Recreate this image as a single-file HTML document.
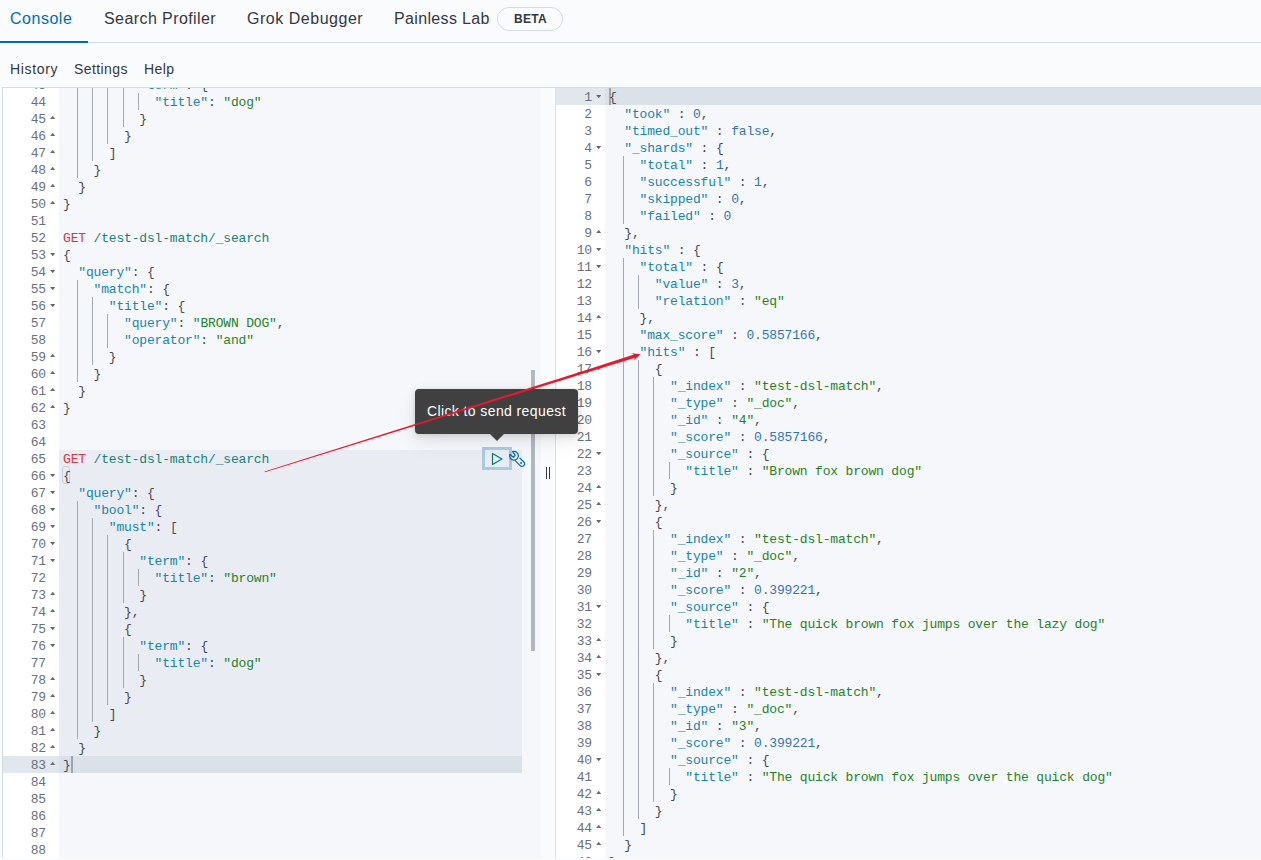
<!DOCTYPE html>
<html><head><meta charset="utf-8"><style>
html,body{margin:0;padding:0;}
body{width:1261px;height:860px;overflow:hidden;position:relative;background:#FAFBFD;font-family:"Liberation Sans",sans-serif;color:#343741;}
.abs{position:absolute;}
.tab{position:absolute;top:0;height:42px;line-height:37px;font-size:16px;color:#343741;white-space:nowrap;letter-spacing:0.35px;}
.tab.sel{color:#006BB4;}
.badge{position:absolute;left:497px;top:7px;width:66px;height:24px;border:1px solid #D3DAE6;border-radius:12px;box-sizing:border-box;font-size:12px;font-weight:bold;line-height:23px;text-align:center;color:#343741;letter-spacing:0.3px;padding-left:1px;}
.menu{position:absolute;top:59px;font-size:14px;line-height:20px;color:#343741;white-space:nowrap;letter-spacing:0.4px;}
.ln{position:absolute;width:40px;text-align:right;height:17px;line-height:17px;font-family:"Liberation Mono",monospace;font-size:13px;letter-spacing:-0.171px;color:#69707D;}
.cl{position:absolute;height:17px;line-height:17px;font-family:"Liberation Mono",monospace;font-size:13px;letter-spacing:-0.171px;white-space:pre;color:#343741;opacity:0.9;}
.ig{position:absolute;width:1px;height:17px;background:#A4A9B1;}
.fw{position:absolute;width:5.4px;height:3.4px;}
.fw.dn{background:#5F646D;clip-path:polygon(0 0,100% 0,50% 100%);margin-top:6.8px;}
.fw.up{background:#6A6B70;clip-path:polygon(50% 0,100% 100%,0 100%);margin-top:5.8px;}
.t-method{color:#D8232F;}
.t-url{color:#00756C;}
.t-key{color:#0079A5;}
.t-str{color:#0A760C;}
.t-num{color:#1A67AC;}
.t-paren{color:#343741;}
.t-punc{color:#343741;}

</style></head><body>
<div class="tab sel" style="left:10px;letter-spacing:0.52px">Console</div>
<div class="tab" style="left:104px;letter-spacing:0.42px">Search Profiler</div>
<div class="tab" style="left:247px;letter-spacing:0.52px">Grok Debugger</div>
<div class="tab" style="left:394px">Painless Lab</div>
<div class="badge">BETA</div>
<div class="abs" style="left:0;top:42px;width:1261px;height:1px;background:#D3DAE6"></div>
<div class="abs" style="left:0;top:41px;width:88px;height:2px;background:#006BB4"></div>
<div class="menu" style="left:10px;letter-spacing:0.65px">History</div>
<div class="menu" style="left:74px">Settings</div>
<div class="menu" style="left:144px">Help</div>
<div class="abs" style="left:2px;top:87px;width:1259px;height:1px;background:#D3DAE6"></div>
<div class="abs" style="left:2px;top:87px;width:1px;height:771px;background:#D3DAE6"></div>
<!-- left editor -->
<div class="abs" style="left:3px;top:88px;width:56px;height:770px;background:#FFFFFF"></div>
<div class="abs" style="left:59px;top:88px;width:482px;height:770px;background:#F5F7FA"></div>
<div class="abs" style="left:59px;top:450px;width:463px;height:323px;background:#E9EDF3"></div>
<div class="abs" style="left:3px;top:756px;width:56px;height:17px;background:#E2E6ED"></div>
<div class="abs" style="left:59px;top:756px;width:463px;height:17px;background:#DBE1E9"></div>
<div class="abs" style="left:62px;top:466px;width:8px;height:18px;border:1px solid #C9CED6;border-radius:3px;box-sizing:border-box"></div>
<div class="abs" style="left:71px;top:756px;width:2px;height:17px;background:#9EA3AC"></div>
<div class="abs" style="left:531px;top:370px;width:4px;height:281px;background:#B3B7BE"></div>
<div style="position:absolute;left:0;top:88px;width:541px;height:770px;overflow:hidden">
<div style="position:absolute;left:0;top:-88px;">
<div class="ln" style="top:77px;left:6px">43</div>
<div class="fw dn" style="top:76px;left:50px"></div>
<div class="ig" style="top:76px;left:77px"></div>
<div class="ig" style="top:76px;left:92px"></div>
<div class="ig" style="top:76px;left:107px"></div>
<div class="ig" style="top:76px;left:123px"></div>
<div class="cl" style="top:77px;left:63.0px">          <span class="t-key">&quot;term&quot;</span><span class="t-punc">:</span> <span class="t-paren">{</span></div>
<div class="ln" style="top:94px;left:6px">44</div>
<div class="ig" style="top:93px;left:77px"></div>
<div class="ig" style="top:93px;left:92px"></div>
<div class="ig" style="top:93px;left:107px"></div>
<div class="ig" style="top:93px;left:123px"></div>
<div class="ig" style="top:93px;left:138px"></div>
<div class="cl" style="top:94px;left:63.0px">            <span class="t-key">&quot;title&quot;</span><span class="t-punc">:</span> <span class="t-str">&quot;dog&quot;</span></div>
<div class="ln" style="top:111px;left:6px">45</div>
<div class="fw up" style="top:110px;left:50px"></div>
<div class="ig" style="top:110px;left:77px"></div>
<div class="ig" style="top:110px;left:92px"></div>
<div class="ig" style="top:110px;left:107px"></div>
<div class="ig" style="top:110px;left:123px"></div>
<div class="cl" style="top:111px;left:63.0px">          <span class="t-paren">}</span></div>
<div class="ln" style="top:128px;left:6px">46</div>
<div class="fw up" style="top:127px;left:50px"></div>
<div class="ig" style="top:127px;left:77px"></div>
<div class="ig" style="top:127px;left:92px"></div>
<div class="ig" style="top:127px;left:107px"></div>
<div class="cl" style="top:128px;left:63.0px">        <span class="t-paren">}</span></div>
<div class="ln" style="top:145px;left:6px">47</div>
<div class="fw up" style="top:144px;left:50px"></div>
<div class="ig" style="top:144px;left:77px"></div>
<div class="ig" style="top:144px;left:92px"></div>
<div class="cl" style="top:145px;left:63.0px">      <span class="t-paren">]</span></div>
<div class="ln" style="top:162px;left:6px">48</div>
<div class="fw up" style="top:161px;left:50px"></div>
<div class="ig" style="top:161px;left:77px"></div>
<div class="cl" style="top:162px;left:63.0px">    <span class="t-paren">}</span></div>
<div class="ln" style="top:179px;left:6px">49</div>
<div class="fw up" style="top:178px;left:50px"></div>
<div class="cl" style="top:179px;left:63.0px">  <span class="t-paren">}</span></div>
<div class="ln" style="top:196px;left:6px">50</div>
<div class="fw up" style="top:195px;left:50px"></div>
<div class="cl" style="top:196px;left:63.0px"><span class="t-paren">}</span></div>
<div class="ln" style="top:213px;left:6px">51</div>
<div class="ln" style="top:230px;left:6px">52</div>
<div class="cl" style="top:230px;left:63.0px"><span class="t-method">GET</span> <span class="t-url">/test-dsl-match/_search</span></div>
<div class="ln" style="top:247px;left:6px">53</div>
<div class="fw dn" style="top:246px;left:50px"></div>
<div class="cl" style="top:247px;left:63.0px"><span class="t-paren">{</span></div>
<div class="ln" style="top:264px;left:6px">54</div>
<div class="fw dn" style="top:263px;left:50px"></div>
<div class="cl" style="top:264px;left:63.0px">  <span class="t-key">&quot;query&quot;</span><span class="t-punc">:</span> <span class="t-paren">{</span></div>
<div class="ln" style="top:281px;left:6px">55</div>
<div class="fw dn" style="top:280px;left:50px"></div>
<div class="ig" style="top:280px;left:77px"></div>
<div class="cl" style="top:281px;left:63.0px">    <span class="t-key">&quot;match&quot;</span><span class="t-punc">:</span> <span class="t-paren">{</span></div>
<div class="ln" style="top:298px;left:6px">56</div>
<div class="fw dn" style="top:297px;left:50px"></div>
<div class="ig" style="top:297px;left:77px"></div>
<div class="ig" style="top:297px;left:92px"></div>
<div class="cl" style="top:298px;left:63.0px">      <span class="t-key">&quot;title&quot;</span><span class="t-punc">:</span> <span class="t-paren">{</span></div>
<div class="ln" style="top:315px;left:6px">57</div>
<div class="ig" style="top:314px;left:77px"></div>
<div class="ig" style="top:314px;left:92px"></div>
<div class="ig" style="top:314px;left:107px"></div>
<div class="cl" style="top:315px;left:63.0px">        <span class="t-key">&quot;query&quot;</span><span class="t-punc">:</span> <span class="t-str">&quot;BROWN DOG&quot;</span><span class="t-punc">,</span></div>
<div class="ln" style="top:332px;left:6px">58</div>
<div class="ig" style="top:331px;left:77px"></div>
<div class="ig" style="top:331px;left:92px"></div>
<div class="ig" style="top:331px;left:107px"></div>
<div class="cl" style="top:332px;left:63.0px">        <span class="t-key">&quot;operator&quot;</span><span class="t-punc">:</span> <span class="t-str">&quot;and&quot;</span></div>
<div class="ln" style="top:349px;left:6px">59</div>
<div class="fw up" style="top:348px;left:50px"></div>
<div class="ig" style="top:348px;left:77px"></div>
<div class="ig" style="top:348px;left:92px"></div>
<div class="cl" style="top:349px;left:63.0px">      <span class="t-paren">}</span></div>
<div class="ln" style="top:366px;left:6px">60</div>
<div class="fw up" style="top:365px;left:50px"></div>
<div class="ig" style="top:365px;left:77px"></div>
<div class="cl" style="top:366px;left:63.0px">    <span class="t-paren">}</span></div>
<div class="ln" style="top:383px;left:6px">61</div>
<div class="fw up" style="top:382px;left:50px"></div>
<div class="cl" style="top:383px;left:63.0px">  <span class="t-paren">}</span></div>
<div class="ln" style="top:400px;left:6px">62</div>
<div class="fw up" style="top:399px;left:50px"></div>
<div class="cl" style="top:400px;left:63.0px"><span class="t-paren">}</span></div>
<div class="ln" style="top:417px;left:6px">63</div>
<div class="ln" style="top:434px;left:6px">64</div>
<div class="ln" style="top:451px;left:6px">65</div>
<div class="cl" style="top:451px;left:63.0px"><span class="t-method">GET</span> <span class="t-url">/test-dsl-match/_search</span></div>
<div class="ln" style="top:468px;left:6px">66</div>
<div class="fw dn" style="top:467px;left:50px"></div>
<div class="cl" style="top:468px;left:63.0px"><span class="t-paren">{</span></div>
<div class="ln" style="top:485px;left:6px">67</div>
<div class="fw dn" style="top:484px;left:50px"></div>
<div class="cl" style="top:485px;left:63.0px">  <span class="t-key">&quot;query&quot;</span><span class="t-punc">:</span> <span class="t-paren">{</span></div>
<div class="ln" style="top:502px;left:6px">68</div>
<div class="fw dn" style="top:501px;left:50px"></div>
<div class="ig" style="top:501px;left:77px"></div>
<div class="cl" style="top:502px;left:63.0px">    <span class="t-key">&quot;bool&quot;</span><span class="t-punc">:</span> <span class="t-paren">{</span></div>
<div class="ln" style="top:519px;left:6px">69</div>
<div class="fw dn" style="top:518px;left:50px"></div>
<div class="ig" style="top:518px;left:77px"></div>
<div class="ig" style="top:518px;left:92px"></div>
<div class="cl" style="top:519px;left:63.0px">      <span class="t-key">&quot;must&quot;</span><span class="t-punc">:</span> <span class="t-paren">[</span></div>
<div class="ln" style="top:536px;left:6px">70</div>
<div class="fw dn" style="top:535px;left:50px"></div>
<div class="ig" style="top:535px;left:77px"></div>
<div class="ig" style="top:535px;left:92px"></div>
<div class="ig" style="top:535px;left:107px"></div>
<div class="cl" style="top:536px;left:63.0px">        <span class="t-paren">{</span></div>
<div class="ln" style="top:553px;left:6px">71</div>
<div class="fw dn" style="top:552px;left:50px"></div>
<div class="ig" style="top:552px;left:77px"></div>
<div class="ig" style="top:552px;left:92px"></div>
<div class="ig" style="top:552px;left:107px"></div>
<div class="ig" style="top:552px;left:123px"></div>
<div class="cl" style="top:553px;left:63.0px">          <span class="t-key">&quot;term&quot;</span><span class="t-punc">:</span> <span class="t-paren">{</span></div>
<div class="ln" style="top:570px;left:6px">72</div>
<div class="ig" style="top:569px;left:77px"></div>
<div class="ig" style="top:569px;left:92px"></div>
<div class="ig" style="top:569px;left:107px"></div>
<div class="ig" style="top:569px;left:123px"></div>
<div class="ig" style="top:569px;left:138px"></div>
<div class="cl" style="top:570px;left:63.0px">            <span class="t-key">&quot;title&quot;</span><span class="t-punc">:</span> <span class="t-str">&quot;brown&quot;</span></div>
<div class="ln" style="top:587px;left:6px">73</div>
<div class="fw up" style="top:586px;left:50px"></div>
<div class="ig" style="top:586px;left:77px"></div>
<div class="ig" style="top:586px;left:92px"></div>
<div class="ig" style="top:586px;left:107px"></div>
<div class="ig" style="top:586px;left:123px"></div>
<div class="cl" style="top:587px;left:63.0px">          <span class="t-paren">}</span></div>
<div class="ln" style="top:604px;left:6px">74</div>
<div class="fw up" style="top:603px;left:50px"></div>
<div class="ig" style="top:603px;left:77px"></div>
<div class="ig" style="top:603px;left:92px"></div>
<div class="ig" style="top:603px;left:107px"></div>
<div class="cl" style="top:604px;left:63.0px">        <span class="t-paren">}</span><span class="t-punc">,</span></div>
<div class="ln" style="top:621px;left:6px">75</div>
<div class="fw dn" style="top:620px;left:50px"></div>
<div class="ig" style="top:620px;left:77px"></div>
<div class="ig" style="top:620px;left:92px"></div>
<div class="ig" style="top:620px;left:107px"></div>
<div class="cl" style="top:621px;left:63.0px">        <span class="t-paren">{</span></div>
<div class="ln" style="top:638px;left:6px">76</div>
<div class="fw dn" style="top:637px;left:50px"></div>
<div class="ig" style="top:637px;left:77px"></div>
<div class="ig" style="top:637px;left:92px"></div>
<div class="ig" style="top:637px;left:107px"></div>
<div class="ig" style="top:637px;left:123px"></div>
<div class="cl" style="top:638px;left:63.0px">          <span class="t-key">&quot;term&quot;</span><span class="t-punc">:</span> <span class="t-paren">{</span></div>
<div class="ln" style="top:655px;left:6px">77</div>
<div class="ig" style="top:654px;left:77px"></div>
<div class="ig" style="top:654px;left:92px"></div>
<div class="ig" style="top:654px;left:107px"></div>
<div class="ig" style="top:654px;left:123px"></div>
<div class="ig" style="top:654px;left:138px"></div>
<div class="cl" style="top:655px;left:63.0px">            <span class="t-key">&quot;title&quot;</span><span class="t-punc">:</span> <span class="t-str">&quot;dog&quot;</span></div>
<div class="ln" style="top:672px;left:6px">78</div>
<div class="fw up" style="top:671px;left:50px"></div>
<div class="ig" style="top:671px;left:77px"></div>
<div class="ig" style="top:671px;left:92px"></div>
<div class="ig" style="top:671px;left:107px"></div>
<div class="ig" style="top:671px;left:123px"></div>
<div class="cl" style="top:672px;left:63.0px">          <span class="t-paren">}</span></div>
<div class="ln" style="top:689px;left:6px">79</div>
<div class="fw up" style="top:688px;left:50px"></div>
<div class="ig" style="top:688px;left:77px"></div>
<div class="ig" style="top:688px;left:92px"></div>
<div class="ig" style="top:688px;left:107px"></div>
<div class="cl" style="top:689px;left:63.0px">        <span class="t-paren">}</span></div>
<div class="ln" style="top:706px;left:6px">80</div>
<div class="fw up" style="top:705px;left:50px"></div>
<div class="ig" style="top:705px;left:77px"></div>
<div class="ig" style="top:705px;left:92px"></div>
<div class="cl" style="top:706px;left:63.0px">      <span class="t-paren">]</span></div>
<div class="ln" style="top:723px;left:6px">81</div>
<div class="fw up" style="top:722px;left:50px"></div>
<div class="ig" style="top:722px;left:77px"></div>
<div class="cl" style="top:723px;left:63.0px">    <span class="t-paren">}</span></div>
<div class="ln" style="top:740px;left:6px">82</div>
<div class="fw up" style="top:739px;left:50px"></div>
<div class="cl" style="top:740px;left:63.0px">  <span class="t-paren">}</span></div>
<div class="ln" style="top:757px;left:6px">83</div>
<div class="fw up" style="top:756px;left:50px"></div>
<div class="cl" style="top:757px;left:63.0px"><span class="t-paren">}</span></div>
<div class="ln" style="top:774px;left:6px">84</div>
<div class="ln" style="top:791px;left:6px">85</div>
<div class="ln" style="top:808px;left:6px">86</div>
<div class="ln" style="top:825px;left:6px">87</div>
<div class="ln" style="top:842px;left:6px">88</div>
</div></div>
<!-- right editor -->
<div class="abs" style="left:555px;top:88px;width:1px;height:770px;background:#DCE1E9"></div>
<div class="abs" style="left:556px;top:88px;width:49px;height:770px;background:#FFFFFF"></div>
<div class="abs" style="left:605px;top:88px;width:656px;height:770px;background:#F5F7FA"></div>
<div class="abs" style="left:556px;top:88px;width:49px;height:17px;background:#E2E6ED"></div>
<div class="abs" style="left:605px;top:88px;width:656px;height:17px;background:#DBE1E9"></div>
<div class="abs" style="left:609px;top:88px;width:2px;height:17px;background:#9EA3AC"></div>
<div style="position:absolute;left:0;top:88px;width:1261px;height:770px;overflow:hidden">
<div style="position:absolute;left:0;top:-88px;">
<div class="ln" style="top:89px;left:552px">1</div>
<div class="fw dn" style="top:88px;left:596px"></div>
<div class="cl" style="top:89px;left:609.0px"><span class="t-paren">{</span></div>
<div class="ln" style="top:106px;left:552px">2</div>
<div class="cl" style="top:106px;left:609.0px">  <span class="t-key">&quot;took&quot;</span> <span class="t-punc">:</span> <span class="t-num">0</span><span class="t-punc">,</span></div>
<div class="ln" style="top:123px;left:552px">3</div>
<div class="cl" style="top:123px;left:609.0px">  <span class="t-key">&quot;timed_out&quot;</span> <span class="t-punc">:</span> <span class="t-num">false</span><span class="t-punc">,</span></div>
<div class="ln" style="top:140px;left:552px">4</div>
<div class="fw dn" style="top:139px;left:596px"></div>
<div class="cl" style="top:140px;left:609.0px">  <span class="t-key">&quot;_shards&quot;</span> <span class="t-punc">:</span> <span class="t-paren">{</span></div>
<div class="ln" style="top:157px;left:552px">5</div>
<div class="ig" style="top:156px;left:623px"></div>
<div class="cl" style="top:157px;left:609.0px">    <span class="t-key">&quot;total&quot;</span> <span class="t-punc">:</span> <span class="t-num">1</span><span class="t-punc">,</span></div>
<div class="ln" style="top:174px;left:552px">6</div>
<div class="ig" style="top:173px;left:623px"></div>
<div class="cl" style="top:174px;left:609.0px">    <span class="t-key">&quot;successful&quot;</span> <span class="t-punc">:</span> <span class="t-num">1</span><span class="t-punc">,</span></div>
<div class="ln" style="top:191px;left:552px">7</div>
<div class="ig" style="top:190px;left:623px"></div>
<div class="cl" style="top:191px;left:609.0px">    <span class="t-key">&quot;skipped&quot;</span> <span class="t-punc">:</span> <span class="t-num">0</span><span class="t-punc">,</span></div>
<div class="ln" style="top:208px;left:552px">8</div>
<div class="ig" style="top:207px;left:623px"></div>
<div class="cl" style="top:208px;left:609.0px">    <span class="t-key">&quot;failed&quot;</span> <span class="t-punc">:</span> <span class="t-num">0</span></div>
<div class="ln" style="top:225px;left:552px">9</div>
<div class="fw up" style="top:224px;left:596px"></div>
<div class="cl" style="top:225px;left:609.0px">  <span class="t-paren">}</span><span class="t-punc">,</span></div>
<div class="ln" style="top:242px;left:552px">10</div>
<div class="fw dn" style="top:241px;left:596px"></div>
<div class="cl" style="top:242px;left:609.0px">  <span class="t-key">&quot;hits&quot;</span> <span class="t-punc">:</span> <span class="t-paren">{</span></div>
<div class="ln" style="top:259px;left:552px">11</div>
<div class="fw dn" style="top:258px;left:596px"></div>
<div class="ig" style="top:258px;left:623px"></div>
<div class="cl" style="top:259px;left:609.0px">    <span class="t-key">&quot;total&quot;</span> <span class="t-punc">:</span> <span class="t-paren">{</span></div>
<div class="ln" style="top:276px;left:552px">12</div>
<div class="ig" style="top:275px;left:623px"></div>
<div class="ig" style="top:275px;left:638px"></div>
<div class="cl" style="top:276px;left:609.0px">      <span class="t-key">&quot;value&quot;</span> <span class="t-punc">:</span> <span class="t-num">3</span><span class="t-punc">,</span></div>
<div class="ln" style="top:293px;left:552px">13</div>
<div class="ig" style="top:292px;left:623px"></div>
<div class="ig" style="top:292px;left:638px"></div>
<div class="cl" style="top:293px;left:609.0px">      <span class="t-key">&quot;relation&quot;</span> <span class="t-punc">:</span> <span class="t-str">&quot;eq&quot;</span></div>
<div class="ln" style="top:310px;left:552px">14</div>
<div class="fw up" style="top:309px;left:596px"></div>
<div class="ig" style="top:309px;left:623px"></div>
<div class="cl" style="top:310px;left:609.0px">    <span class="t-paren">}</span><span class="t-punc">,</span></div>
<div class="ln" style="top:327px;left:552px">15</div>
<div class="ig" style="top:326px;left:623px"></div>
<div class="cl" style="top:327px;left:609.0px">    <span class="t-key">&quot;max_score&quot;</span> <span class="t-punc">:</span> <span class="t-num">0.5857166</span><span class="t-punc">,</span></div>
<div class="ln" style="top:344px;left:552px">16</div>
<div class="fw dn" style="top:343px;left:596px"></div>
<div class="ig" style="top:343px;left:623px"></div>
<div class="cl" style="top:344px;left:609.0px">    <span class="t-key">&quot;hits&quot;</span> <span class="t-punc">:</span> <span class="t-paren">[</span></div>
<div class="ln" style="top:361px;left:552px">17</div>
<div class="fw dn" style="top:360px;left:596px"></div>
<div class="ig" style="top:360px;left:623px"></div>
<div class="ig" style="top:360px;left:638px"></div>
<div class="cl" style="top:361px;left:609.0px">      <span class="t-paren">{</span></div>
<div class="ln" style="top:378px;left:552px">18</div>
<div class="ig" style="top:377px;left:623px"></div>
<div class="ig" style="top:377px;left:638px"></div>
<div class="ig" style="top:377px;left:653px"></div>
<div class="cl" style="top:378px;left:609.0px">        <span class="t-key">&quot;_index&quot;</span> <span class="t-punc">:</span> <span class="t-str">&quot;test-dsl-match&quot;</span><span class="t-punc">,</span></div>
<div class="ln" style="top:395px;left:552px">19</div>
<div class="ig" style="top:394px;left:623px"></div>
<div class="ig" style="top:394px;left:638px"></div>
<div class="ig" style="top:394px;left:653px"></div>
<div class="cl" style="top:395px;left:609.0px">        <span class="t-key">&quot;_type&quot;</span> <span class="t-punc">:</span> <span class="t-str">&quot;_doc&quot;</span><span class="t-punc">,</span></div>
<div class="ln" style="top:412px;left:552px">20</div>
<div class="ig" style="top:411px;left:623px"></div>
<div class="ig" style="top:411px;left:638px"></div>
<div class="ig" style="top:411px;left:653px"></div>
<div class="cl" style="top:412px;left:609.0px">        <span class="t-key">&quot;_id&quot;</span> <span class="t-punc">:</span> <span class="t-str">&quot;4&quot;</span><span class="t-punc">,</span></div>
<div class="ln" style="top:429px;left:552px">21</div>
<div class="ig" style="top:428px;left:623px"></div>
<div class="ig" style="top:428px;left:638px"></div>
<div class="ig" style="top:428px;left:653px"></div>
<div class="cl" style="top:429px;left:609.0px">        <span class="t-key">&quot;_score&quot;</span> <span class="t-punc">:</span> <span class="t-num">0.5857166</span><span class="t-punc">,</span></div>
<div class="ln" style="top:446px;left:552px">22</div>
<div class="fw dn" style="top:445px;left:596px"></div>
<div class="ig" style="top:445px;left:623px"></div>
<div class="ig" style="top:445px;left:638px"></div>
<div class="ig" style="top:445px;left:653px"></div>
<div class="cl" style="top:446px;left:609.0px">        <span class="t-key">&quot;_source&quot;</span> <span class="t-punc">:</span> <span class="t-paren">{</span></div>
<div class="ln" style="top:463px;left:552px">23</div>
<div class="ig" style="top:462px;left:623px"></div>
<div class="ig" style="top:462px;left:638px"></div>
<div class="ig" style="top:462px;left:653px"></div>
<div class="ig" style="top:462px;left:669px"></div>
<div class="cl" style="top:463px;left:609.0px">          <span class="t-key">&quot;title&quot;</span> <span class="t-punc">:</span> <span class="t-str">&quot;Brown fox brown dog&quot;</span></div>
<div class="ln" style="top:480px;left:552px">24</div>
<div class="fw up" style="top:479px;left:596px"></div>
<div class="ig" style="top:479px;left:623px"></div>
<div class="ig" style="top:479px;left:638px"></div>
<div class="ig" style="top:479px;left:653px"></div>
<div class="cl" style="top:480px;left:609.0px">        <span class="t-paren">}</span></div>
<div class="ln" style="top:497px;left:552px">25</div>
<div class="fw up" style="top:496px;left:596px"></div>
<div class="ig" style="top:496px;left:623px"></div>
<div class="ig" style="top:496px;left:638px"></div>
<div class="cl" style="top:497px;left:609.0px">      <span class="t-paren">}</span><span class="t-punc">,</span></div>
<div class="ln" style="top:514px;left:552px">26</div>
<div class="fw dn" style="top:513px;left:596px"></div>
<div class="ig" style="top:513px;left:623px"></div>
<div class="ig" style="top:513px;left:638px"></div>
<div class="cl" style="top:514px;left:609.0px">      <span class="t-paren">{</span></div>
<div class="ln" style="top:531px;left:552px">27</div>
<div class="ig" style="top:530px;left:623px"></div>
<div class="ig" style="top:530px;left:638px"></div>
<div class="ig" style="top:530px;left:653px"></div>
<div class="cl" style="top:531px;left:609.0px">        <span class="t-key">&quot;_index&quot;</span> <span class="t-punc">:</span> <span class="t-str">&quot;test-dsl-match&quot;</span><span class="t-punc">,</span></div>
<div class="ln" style="top:548px;left:552px">28</div>
<div class="ig" style="top:547px;left:623px"></div>
<div class="ig" style="top:547px;left:638px"></div>
<div class="ig" style="top:547px;left:653px"></div>
<div class="cl" style="top:548px;left:609.0px">        <span class="t-key">&quot;_type&quot;</span> <span class="t-punc">:</span> <span class="t-str">&quot;_doc&quot;</span><span class="t-punc">,</span></div>
<div class="ln" style="top:565px;left:552px">29</div>
<div class="ig" style="top:564px;left:623px"></div>
<div class="ig" style="top:564px;left:638px"></div>
<div class="ig" style="top:564px;left:653px"></div>
<div class="cl" style="top:565px;left:609.0px">        <span class="t-key">&quot;_id&quot;</span> <span class="t-punc">:</span> <span class="t-str">&quot;2&quot;</span><span class="t-punc">,</span></div>
<div class="ln" style="top:582px;left:552px">30</div>
<div class="ig" style="top:581px;left:623px"></div>
<div class="ig" style="top:581px;left:638px"></div>
<div class="ig" style="top:581px;left:653px"></div>
<div class="cl" style="top:582px;left:609.0px">        <span class="t-key">&quot;_score&quot;</span> <span class="t-punc">:</span> <span class="t-num">0.399221</span><span class="t-punc">,</span></div>
<div class="ln" style="top:599px;left:552px">31</div>
<div class="fw dn" style="top:598px;left:596px"></div>
<div class="ig" style="top:598px;left:623px"></div>
<div class="ig" style="top:598px;left:638px"></div>
<div class="ig" style="top:598px;left:653px"></div>
<div class="cl" style="top:599px;left:609.0px">        <span class="t-key">&quot;_source&quot;</span> <span class="t-punc">:</span> <span class="t-paren">{</span></div>
<div class="ln" style="top:616px;left:552px">32</div>
<div class="ig" style="top:615px;left:623px"></div>
<div class="ig" style="top:615px;left:638px"></div>
<div class="ig" style="top:615px;left:653px"></div>
<div class="ig" style="top:615px;left:669px"></div>
<div class="cl" style="top:616px;left:609.0px">          <span class="t-key">&quot;title&quot;</span> <span class="t-punc">:</span> <span class="t-str">&quot;The quick brown fox jumps over the lazy dog&quot;</span></div>
<div class="ln" style="top:633px;left:552px">33</div>
<div class="fw up" style="top:632px;left:596px"></div>
<div class="ig" style="top:632px;left:623px"></div>
<div class="ig" style="top:632px;left:638px"></div>
<div class="ig" style="top:632px;left:653px"></div>
<div class="cl" style="top:633px;left:609.0px">        <span class="t-paren">}</span></div>
<div class="ln" style="top:650px;left:552px">34</div>
<div class="fw up" style="top:649px;left:596px"></div>
<div class="ig" style="top:649px;left:623px"></div>
<div class="ig" style="top:649px;left:638px"></div>
<div class="cl" style="top:650px;left:609.0px">      <span class="t-paren">}</span><span class="t-punc">,</span></div>
<div class="ln" style="top:667px;left:552px">35</div>
<div class="fw dn" style="top:666px;left:596px"></div>
<div class="ig" style="top:666px;left:623px"></div>
<div class="ig" style="top:666px;left:638px"></div>
<div class="cl" style="top:667px;left:609.0px">      <span class="t-paren">{</span></div>
<div class="ln" style="top:684px;left:552px">36</div>
<div class="ig" style="top:683px;left:623px"></div>
<div class="ig" style="top:683px;left:638px"></div>
<div class="ig" style="top:683px;left:653px"></div>
<div class="cl" style="top:684px;left:609.0px">        <span class="t-key">&quot;_index&quot;</span> <span class="t-punc">:</span> <span class="t-str">&quot;test-dsl-match&quot;</span><span class="t-punc">,</span></div>
<div class="ln" style="top:701px;left:552px">37</div>
<div class="ig" style="top:700px;left:623px"></div>
<div class="ig" style="top:700px;left:638px"></div>
<div class="ig" style="top:700px;left:653px"></div>
<div class="cl" style="top:701px;left:609.0px">        <span class="t-key">&quot;_type&quot;</span> <span class="t-punc">:</span> <span class="t-str">&quot;_doc&quot;</span><span class="t-punc">,</span></div>
<div class="ln" style="top:718px;left:552px">38</div>
<div class="ig" style="top:717px;left:623px"></div>
<div class="ig" style="top:717px;left:638px"></div>
<div class="ig" style="top:717px;left:653px"></div>
<div class="cl" style="top:718px;left:609.0px">        <span class="t-key">&quot;_id&quot;</span> <span class="t-punc">:</span> <span class="t-str">&quot;3&quot;</span><span class="t-punc">,</span></div>
<div class="ln" style="top:735px;left:552px">39</div>
<div class="ig" style="top:734px;left:623px"></div>
<div class="ig" style="top:734px;left:638px"></div>
<div class="ig" style="top:734px;left:653px"></div>
<div class="cl" style="top:735px;left:609.0px">        <span class="t-key">&quot;_score&quot;</span> <span class="t-punc">:</span> <span class="t-num">0.399221</span><span class="t-punc">,</span></div>
<div class="ln" style="top:752px;left:552px">40</div>
<div class="fw dn" style="top:751px;left:596px"></div>
<div class="ig" style="top:751px;left:623px"></div>
<div class="ig" style="top:751px;left:638px"></div>
<div class="ig" style="top:751px;left:653px"></div>
<div class="cl" style="top:752px;left:609.0px">        <span class="t-key">&quot;_source&quot;</span> <span class="t-punc">:</span> <span class="t-paren">{</span></div>
<div class="ln" style="top:769px;left:552px">41</div>
<div class="ig" style="top:768px;left:623px"></div>
<div class="ig" style="top:768px;left:638px"></div>
<div class="ig" style="top:768px;left:653px"></div>
<div class="ig" style="top:768px;left:669px"></div>
<div class="cl" style="top:769px;left:609.0px">          <span class="t-key">&quot;title&quot;</span> <span class="t-punc">:</span> <span class="t-str">&quot;The quick brown fox jumps over the quick dog&quot;</span></div>
<div class="ln" style="top:786px;left:552px">42</div>
<div class="fw up" style="top:785px;left:596px"></div>
<div class="ig" style="top:785px;left:623px"></div>
<div class="ig" style="top:785px;left:638px"></div>
<div class="ig" style="top:785px;left:653px"></div>
<div class="cl" style="top:786px;left:609.0px">        <span class="t-paren">}</span></div>
<div class="ln" style="top:803px;left:552px">43</div>
<div class="fw up" style="top:802px;left:596px"></div>
<div class="ig" style="top:802px;left:623px"></div>
<div class="ig" style="top:802px;left:638px"></div>
<div class="cl" style="top:803px;left:609.0px">      <span class="t-paren">}</span></div>
<div class="ln" style="top:820px;left:552px">44</div>
<div class="fw up" style="top:819px;left:596px"></div>
<div class="ig" style="top:819px;left:623px"></div>
<div class="cl" style="top:820px;left:609.0px">    <span class="t-paren">]</span></div>
<div class="ln" style="top:837px;left:552px">45</div>
<div class="fw up" style="top:836px;left:596px"></div>
<div class="cl" style="top:837px;left:609.0px">  <span class="t-paren">}</span></div>
<div class="ln" style="top:854px;left:552px">46</div>
<div class="fw up" style="top:853px;left:596px"></div>
<div class="cl" style="top:854px;left:609.0px"><span class="t-paren">}</span></div>
</div></div>
<!-- resizer -->
<div class="abs" style="left:546px;top:467px;width:1px;height:12px;background:#343741"></div>
<div class="abs" style="left:549px;top:467px;width:1px;height:12px;background:#343741"></div>
<!-- action buttons -->
<div class="abs" style="left:482px;top:447px;width:30px;height:23px;border:3px solid #A9CBE0;box-sizing:border-box;background:#E9EDF3"></div>
<svg class="abs" style="left:482px;top:447px" width="30" height="23" viewBox="0 0 30 23">
<path d="M10.5 6.5 L20 12 L10.5 17.5 Z" fill="none" stroke="#017D73" stroke-width="1.2" stroke-linejoin="round"/>
</svg>
<svg class="abs" style="left:505px;top:447px" width="25" height="23" viewBox="0 0 25 23">
<g fill="none" stroke="#006BB4" stroke-width="1.25" stroke-linejoin="round" stroke-linecap="round">
<path d="M7.5 4.67 A4.4 4.4 0 1 1 4.87 7.3 L8.4 10.3 L10.3 8.4 Z"/>
<path d="M10.2 13.68 L15.16 18.64 A2.6 2.6 0 0 0 18.84 14.96 L15.0 11.12"/>
</g>
<circle cx="16" cy="16" r="0.9" fill="#006BB4"/>
</svg>
<!-- tooltip -->
<div class="abs" style="left:415px;top:389px;width:163px;height:45px;background:#404040;border-radius:4px;box-shadow:0 1px 5px rgba(0,0,0,0.1),0 3.6px 13px rgba(0,0,0,0.07),0 8.4px 23px rgba(0,0,0,0.06)"></div>
<div class="abs" style="left:489px;top:433px;width:16px;height:8px;background:#404040;clip-path:polygon(0 0,100% 0,50% 100%)"></div>
<div class="abs" style="left:415px;top:389px;width:163px;height:45px;line-height:44px;text-align:center;color:#FFFFFF;font-size:14px;letter-spacing:0.4px;white-space:nowrap">Click to send request</div>
<!-- red arrow -->
<svg class="abs" style="left:0;top:0" width="1261" height="860" viewBox="0 0 1261 860">
<path d="M264.58 471.52 L452.43 412.24 L583.91 370.70 L633.99 354.62 L630.92 353.17 L640.70 354.30 L633.30 360.80 L635.00 357.86 L584.69 373.18 L452.97 413.96 L264.82 472.28 Z" fill="#E6192B"/>
</svg>

</body></html>
